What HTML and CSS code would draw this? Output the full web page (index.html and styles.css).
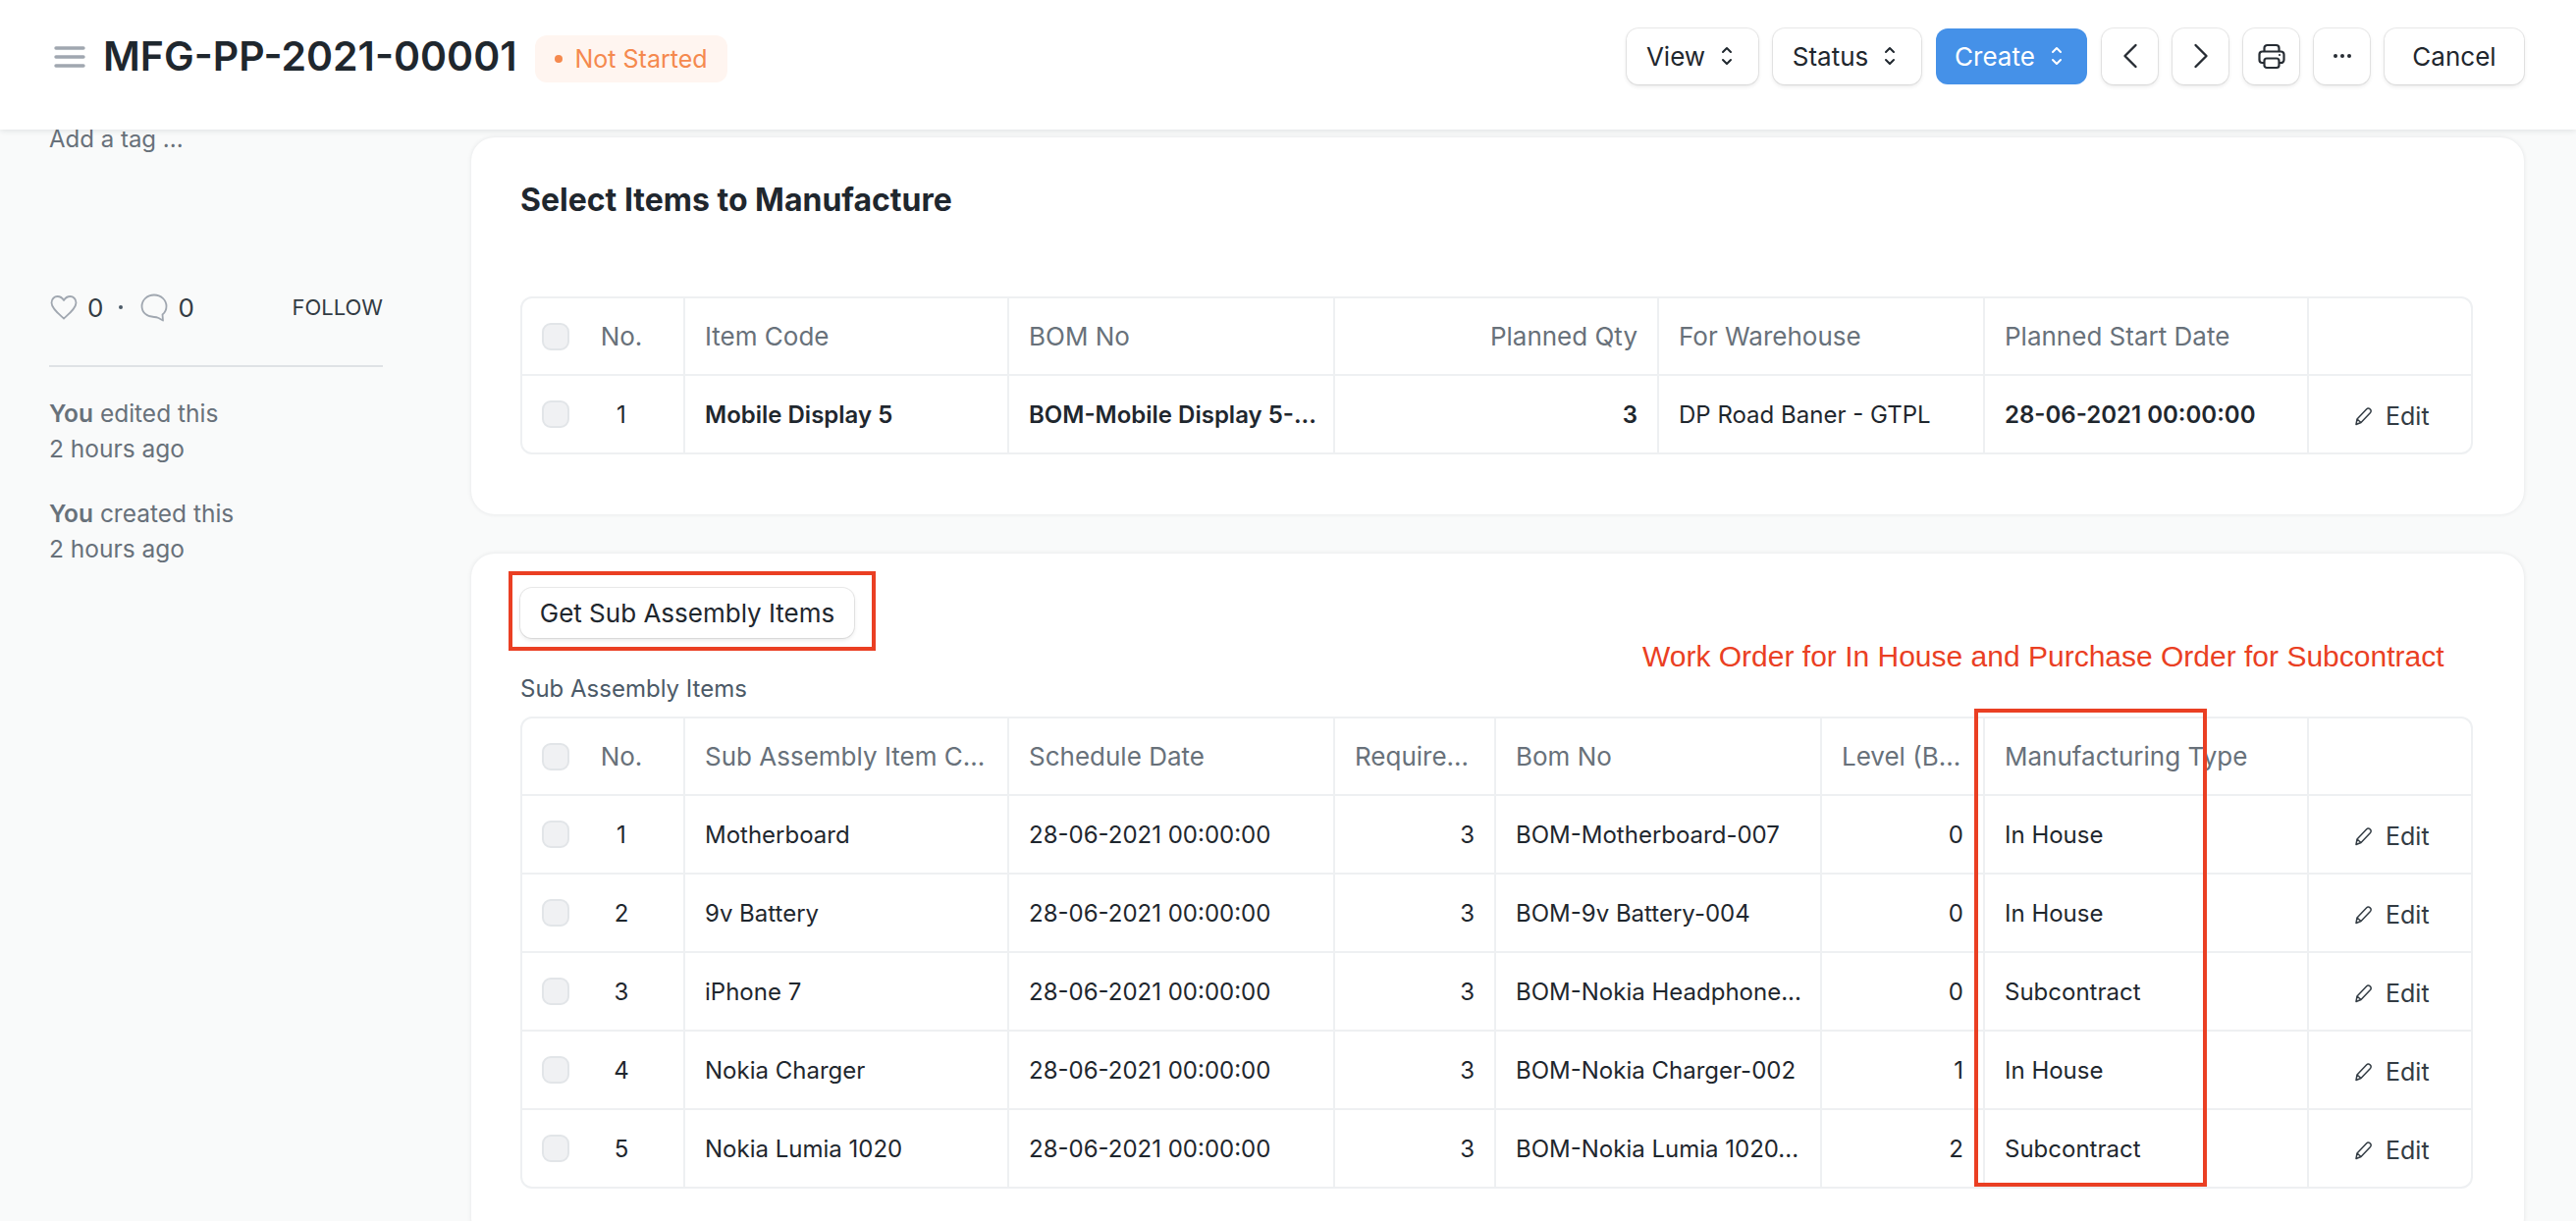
FILE: index.html
```html
<!DOCTYPE html>
<html lang="en">
<head>
  <meta charset="UTF-8">
  <title>MFG-PP-2021-00001</title>
  <link rel="stylesheet" href="styles.css">
</head>
<body>
  <svg class="defs" width="0" height="0">
    <symbol id="sort" viewBox="0 0 14 28"><path d="M3 10l4-4 4 4M3 18l4 4 4-4" fill="none" stroke="currentColor" stroke-width="2" stroke-linecap="round" stroke-linejoin="round"/></symbol>
    <symbol id="pencil" viewBox="0 0 20 20"><path d="M2 18.500l1-5.500L12.500 3c1-1 2.600-1.100 3.700-.2 1.200 1 1.300 2.700.3 3.800L7 16.500l-5 2zM3 13l4 3.500" fill="none" stroke="currentColor" stroke-width="1.500" stroke-linejoin="round"/></symbol>
  </svg>

  <header class="topbar">
    <div class="title-area">
      <svg class="menu-icon" viewBox="0 0 32 24"><path d="M2 3h28M2 12h28M2 21h28" stroke="#a0a7b0" stroke-width="3.400" stroke-linecap="round"/></svg>
      <h1>MFG-PP-2021-00001</h1>
      <span class="badge"><i class="dot"></i>Not Started</span>
    </div>
    <div class="actions">
      <button class="btn btn-view">View <svg class="sort"><use href="#sort"/></svg></button>
      <button class="btn btn-status">Status <svg class="sort"><use href="#sort"/></svg></button>
      <button class="btn btn-create">Create <svg class="sort"><use href="#sort"/></svg></button>
      <button class="btn btn-icon"><svg width="28" height="28" viewBox="0 0 28 28"><path d="M19.500 3L8.500 14l11 11" fill="none" stroke="#262c33" stroke-width="2.400" stroke-linecap="round" stroke-linejoin="round"/></svg></button>
      <button class="btn btn-icon"><svg width="28" height="28" viewBox="0 0 28 28"><path d="M8.500 3l11 11-11 11" fill="none" stroke="#262c33" stroke-width="2.400" stroke-linecap="round" stroke-linejoin="round"/></svg></button>
      <button class="btn btn-icon"><svg width="28" height="28" viewBox="0 0 28 28"><g fill="none" stroke="#262c33" stroke-width="2.200" stroke-linejoin="round"><path d="M6.500 9.500V6A3 3 0 0 1 9.500 3h9a3 3 0 0 1 3 3v3.500"/><path d="M6.500 21H4.500a3 3 0 0 1-3-3v-5.500a3 3 0 0 1 3-3h19a3 3 0 0 1 3 3V18a3 3 0 0 1-3 3h-2"/><rect x="6.500" y="16.500" width="15" height="9.500" rx="2.500"/></g><circle cx="22" cy="13" r="1.100" fill="#262c33"/></svg></button>
      <button class="btn btn-icon"><svg width="22" height="6" viewBox="0 0 22 6"><circle cx="4" cy="3" r="2" fill="#262c33"/><circle cx="11" cy="3" r="2" fill="#262c33"/><circle cx="18" cy="3" r="2" fill="#262c33"/></svg></button>
      <button class="btn btn-cancel">Cancel</button>
    </div>
  </header>

  <div class="page">
    <aside class="sidebar">
      <div class="add-tag">Add a tag ...</div>
      <div class="likes">
        <div class="counts">
          <svg width="30" height="28" viewBox="0 0 30 28"><path d="M15 25.500C9 20 2.500 15 2.500 9.500 2.500 5.500 5.500 3 8.500 3c2.800 0 5 1.500 6.500 4 1.500-2.500 3.700-4 6.500-4 3 0 6 2.500 6 6.500 0 5.500-6.500 10.500-12.500 16z" fill="none" stroke="#a0a7b0" stroke-width="1.800" stroke-linejoin="round"/></svg>
          <span>0</span>
          <b class="sep"></b>
          <svg width="30" height="30" viewBox="0 0 30 30"><path d="M15 2.500C8 2.500 2.500 7.500 2.500 14S8 25 15 25c1.500 0 3 .3 4.500 1l4.500 2.500-.5-6c2.500-2 4-5 4-8.500C27.500 7.500 22 2.500 15 2.500z" fill="none" stroke="#a0a7b0" stroke-width="1.800" stroke-linejoin="round"/></svg>
          <span>0</span>
        </div>
        <span class="follow">FOLLOW</span>
      </div>
      <div class="activity">
        <p><b>You</b> edited this<br>2 hours ago</p>
        <p><b>You</b> created this<br>2 hours ago</p>
      </div>
    </aside>

    <main class="content">
      <section class="card card-first">
        <h2>Select Items to Manufacture</h2>
        <table class="grid grid-items">
          <tr class="head">
            <th class="no"><div class="no-wrap"><i class="check"></i><span>No.</span></div></th>
            <th>Item Code</th><th>BOM No</th><th class="num">Planned Qty</th><th>For Warehouse</th><th>Planned Start Date</th><th></th>
          </tr>
          <tr class="strong">
            <td class="no"><div class="no-wrap"><i class="check"></i><span>1</span></div></td>
            <td class="bold">Mobile Display 5</td><td class="bold">BOM-Mobile Display 5-...</td><td class="num bold">3</td><td>DP Road Baner - GTPL</td><td class="bold">28-06-2021 00:00:00</td>
            <td class="edit"><span><svg><use href="#pencil"/></svg>Edit</span></td>
          </tr>
        </table>
      </section>

      <section class="card card-second">
        <button class="btn btn-get">Get Sub Assembly Items</button>
        <div class="field-label">Sub Assembly Items</div>
        <table class="grid grid-sub">
          <tr class="head">
            <th class="no"><div class="no-wrap"><i class="check"></i><span>No.</span></div></th>
            <th>Sub Assembly Item C...</th><th>Schedule Date</th><th>Require...</th><th>Bom No</th><th>Level (B...</th><th>Manufacturing Type</th><th></th>
          </tr>
          <tr>
            <td class="no"><div class="no-wrap"><i class="check"></i><span>1</span></div></td>
            <td>Motherboard</td><td>28-06-2021 00:00:00</td><td class="num">3</td><td>BOM-Motherboard-007</td><td class="num">0</td><td>In House</td>
            <td class="edit"><span><svg><use href="#pencil"/></svg>Edit</span></td>
          </tr>
          <tr>
            <td class="no"><div class="no-wrap"><i class="check"></i><span>2</span></div></td>
            <td>9v Battery</td><td>28-06-2021 00:00:00</td><td class="num">3</td><td>BOM-9v Battery-004</td><td class="num">0</td><td>In House</td>
            <td class="edit"><span><svg><use href="#pencil"/></svg>Edit</span></td>
          </tr>
          <tr>
            <td class="no"><div class="no-wrap"><i class="check"></i><span>3</span></div></td>
            <td>iPhone 7</td><td>28-06-2021 00:00:00</td><td class="num">3</td><td>BOM-Nokia Headphone...</td><td class="num">0</td><td>Subcontract</td>
            <td class="edit"><span><svg><use href="#pencil"/></svg>Edit</span></td>
          </tr>
          <tr>
            <td class="no"><div class="no-wrap"><i class="check"></i><span>4</span></div></td>
            <td>Nokia Charger</td><td>28-06-2021 00:00:00</td><td class="num">3</td><td>BOM-Nokia Charger-002</td><td class="num">1</td><td>In House</td>
            <td class="edit"><span><svg><use href="#pencil"/></svg>Edit</span></td>
          </tr>
          <tr>
            <td class="no"><div class="no-wrap"><i class="check"></i><span>5</span></div></td>
            <td>Nokia Lumia 1020</td><td>28-06-2021 00:00:00</td><td class="num">3</td><td>BOM-Nokia Lumia 1020...</td><td class="num">2</td><td>Subcontract</td>
            <td class="edit"><span><svg><use href="#pencil"/></svg>Edit</span></td>
          </tr>
        </table>

        <div class="mark mark-button"></div>
        <div class="mark mark-type"></div>
        <div class="note">Work Order for In House and Purchase Order for Subcontract</div>
      </section>
    </main>
  </div>
</body>
</html>
```

FILE: styles.css
```css
html, body {
  height: 1244px;
  overflow: hidden;
}

body {
  margin: 0;
  background-color: #f9fafa;
  color: #1f272e;
  font-family: 'Inter', sans-serif;
  font-size: 24px;
}

.defs {
  position: absolute;
}

.topbar {
  position: relative;
  z-index: 2;
  height: 132px;
  box-sizing: border-box;
  padding: 0 53px 0 55px;
  display: flex;
  align-items: center;
  justify-content: space-between;
  background-color: #fff;
  box-shadow: 0 1px 6px rgba(25, 39, 52, 0.12);
}

.title-area {
  display: flex;
  align-items: center;
  margin-top: -18px;
}

.menu-icon {
  width: 32px;
  height: 24px;
  margin-top: 2px;
  margin-right: 18px;
}

h1 {
  margin: 0;
  font-size: 41px;
  font-weight: 600;
  line-height: 48px;
}

.badge {
  display: flex;
  align-items: center;
  height: 48px;
  margin-top: 6px;
  margin-left: 18px;
  padding: 0 20px;
  background-color: #fff5f0;
  border-radius: 12px;
  color: #f5894e;
  font-size: 25px;
}

.dot {
  width: 8px;
  height: 8px;
  margin-right: 13px;
  border-radius: 50%;
  background-color: #f5894e;
}

.actions {
  display: flex;
  gap: 15px;
  margin-top: -18px;
}

.btn {
  display: flex;
  align-items: center;
  justify-content: center;
  height: 57px;
  padding: 0;
  background-color: #fff;
  border: 0;
  border-radius: 12px;
  box-shadow: 0 0 0 1px rgba(0, 0, 0, 0.08), 0 2px 4px rgba(0, 0, 0, 0.1);
  color: #1f272e;
  font-family: inherit;
  font-size: 26px;
}

.btn-view { width: 134px; }
.btn-status { width: 151px; }
.btn-create { width: 154px; background-color: #4591e8; color: #fff; box-shadow: none; }
.btn-icon { width: 57px; }
.btn-cancel { width: 142px; }

.sort {
  width: 14px;
  height: 28px;
  margin-left: 15px;
  margin-right: 5px;
}

.page {
  display: flex;
  padding-left: 50px;
  padding-right: 53px;
}

.sidebar {
  width: 340px;
  margin-right: 90px;
  flex-shrink: 0;
  color: #68717a;
}

.add-tag {
  margin-top: -4px;
  line-height: 28px;
}

.likes {
  display: flex;
  align-items: center;
  justify-content: space-between;
  height: 30px;
  margin-top: 142px;
  padding-bottom: 44px;
  border-bottom: 2px solid #dfe2e5;
}

.counts {
  display: flex;
  align-items: center;
  gap: 9px;
  font-size: 26px;
  color: #333c44;
}

.sep {
  width: 4px;
  height: 4px;
  margin: 0 8px 0 7px;
  border-radius: 50%;
  background-color: #4c5a67;
}

.follow {
  font-size: 22px;
  color: #333c44;
}

.activity {
  margin-top: 29px;
  font-size: 24.500px;
  line-height: 36px;
}

.activity p {
  margin: 0 0 30px;
}

.activity b {
  font-weight: 600;
  color: #68717a;
}

.content {
  flex: 1;
  padding-top: 8px;
}

.card {
  position: relative;
  box-sizing: border-box;
  background-color: #fff;
  border-radius: 24px;
  box-shadow: 0 0 4px rgba(25, 39, 52, 0.1);
  padding: 0 50px;
}

.card-first {
  height: 384px;
  margin-bottom: 40px;
}

.card-second {
  height: 700px;
}

h2 {
  margin: 0;
  padding-top: 44px;
  height: 118px;
  font-size: 32px;
  font-weight: 700;
  line-height: 40px;
}

.grid {
  width: 1989px;
  table-layout: fixed;
  border-collapse: separate;
  border-spacing: 0;
  border: 2px solid #eef0f2;
  border-radius: 12px;
}

.grid th, .grid td {
  padding: 0 20px;
  box-sizing: border-box;
  border-right: 2px solid #eef0f2;
  border-bottom: 2px solid #eef0f2;
  font-size: 24px;
  font-weight: 400;
  text-align: left;
  white-space: nowrap;
}

.grid th {
  height: 79px;
  font-size: 26px;
  color: #68717a;
}

.grid td {
  height: 80px;
  color: #1f272e;
}

.grid tr:last-child td {
  height: 78px;
  border-bottom: 0;
}

.grid th:last-child, .grid td:last-child {
  border-right: 0;
}

.grid .num {
  text-align: right;
}

.grid .bold {
  font-weight: 600;
}

.no-wrap {
  display: flex;
  align-items: center;
}

.no-wrap span {
  width: 90px;
  margin-left: 8px;
  text-align: center;
}

.grid .no {
  padding: 0 0 0 20px;
}

.check {
  width: 28px;
  height: 28px;
  box-sizing: border-box;
  border: 2px solid #e2e5e8;
  border-radius: 9px;
  background-color: #f0f1f3;
}

.grid-items th:nth-child(1) { width: 166px; }
.grid-items th:nth-child(2) { width: 330px; }
.grid-items th:nth-child(3) { width: 332px; }
.grid-items th:nth-child(4) { width: 330px; }
.grid-items th:nth-child(5) { width: 332px; }
.grid-items th:nth-child(6) { width: 330px; }

.grid-sub th:nth-child(1) { width: 166px; }
.grid-sub th:nth-child(2) { width: 330px; }
.grid-sub th:nth-child(3) { width: 332px; }
.grid-sub th:nth-child(4) { width: 164px; }
.grid-sub th:nth-child(5) { width: 332px; }
.grid-sub th:nth-child(6) { width: 166px; }
.grid-sub th:nth-child(7) { width: 330px; }

.grid .edit {
  padding: 4px 0 0 46px;
  font-size: 25px;
  color: #333c44;
}

.edit span {
  display: flex;
  align-items: center;
}

.edit svg {
  width: 20px;
  height: 20px;
  margin-right: 12px;
}

.btn-get {
  width: 340px;
  height: 51px;
  position: relative;
  top: 35px;
  margin-bottom: 35px;
  font-size: 26px;
}

.field-label {
  margin: 0 0 13px;
  padding-top: 37px;
  line-height: 30px;
  color: #4c5a67;
}

.mark {
  position: absolute;
  box-sizing: border-box;
  border: 4px solid #ea3f23;
}

.mark-button {
  left: 38px;
  top: 18px;
  width: 374px;
  height: 81px;
}

.mark-type {
  left: 1531px;
  top: 158px;
  width: 237px;
  height: 487px;
}

.note {
  position: absolute;
  left: 1193px;
  top: 87px;
  font-family: 'Liberation Sans', sans-serif;
  font-size: 30px;
  line-height: 36px;
  color: #ea3f23;
  white-space: nowrap;
}
```
